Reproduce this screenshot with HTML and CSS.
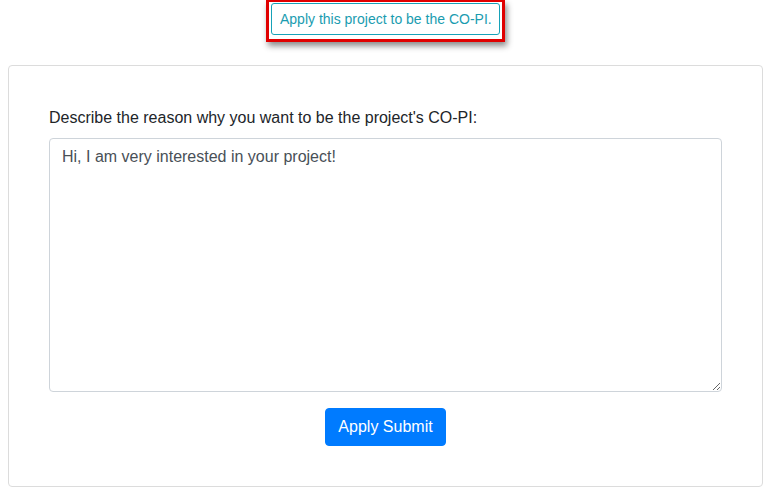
FILE: index.html
```html
<!DOCTYPE html>
<html>
<head>
<meta charset="utf-8">
<link rel="stylesheet" href="styles.css">
</head>
<body>
<div class="top">
  <div class="highlight">
    <button class="btn-outline-info">Apply this project to be the CO-PI.</button>
  </div>
</div>
<div class="card">
  <label class="label">Describe the reason why you want to be the project's CO-PI:</label>
  <textarea class="textarea">Hi, I am very interested in your project!</textarea>
  <div class="actions">
    <button class="btn-primary">Apply Submit</button>
  </div>
</div>
</body>
</html>
```
FILE: styles.css
```css
html, body {
  margin: 0;
  padding: 0;
  background: #fff;
}
body {
  padding: 0 8px;
  font-family: "Liberation Sans", Arial, sans-serif;
  color: #212529;
}
.top {
  display: flex;
  justify-content: center;
  height: 65px;
}
.highlight {
  border: 3px solid #e00000;
  border-top-width: 2px;
  padding: 1px 2px 2px 2px;
  box-sizing: border-box;
  height: 42px;
  box-shadow: 2px 4px 6px rgba(0,0,0,0.45);
}
.btn-outline-info {
  font-family: "Liberation Sans", Arial, sans-serif;
  font-size: 14px;
  line-height: 20px;
  color: #1a9cb0;
  background: #fff;
  border: 1px solid #17a2b8;
  border-radius: 3px;
  padding: 5px 8px;
  height: 32px;
  box-sizing: border-box;
  width: 229px;
  white-space: nowrap;
}
.card {
  border: 1px solid #dcdcdc;
  border-radius: 4px;
  padding: 40px 40px 40px 40px;
  height: 422px;
  box-sizing: border-box;
  display: flex;
  flex-direction: column;
}
.label {
  font-size: 16px;
  line-height: 24px;
  margin-bottom: 8px;
}
.textarea {
  font-family: "Liberation Sans", Arial, sans-serif;
  font-size: 16px;
  line-height: 24px;
  color: #495057;
  border: 1px solid #ced4da;
  border-radius: 4px;
  padding: 6px 12px;
  height: 254px;
  box-sizing: border-box;
  resize: vertical;
  width: 100%;
  margin: 0;
}
.actions {
  display: flex;
  justify-content: center;
  margin-top: 16px;
}
.btn-primary {
  font-family: "Liberation Sans", Arial, sans-serif;
  font-size: 16px;
  line-height: 24px;
  color: #fff;
  background: #007bff;
  border: 1px solid #007bff;
  border-radius: 4px;
  padding: 6px 12px;
  height: 38px;
  white-space: nowrap;
}
```
